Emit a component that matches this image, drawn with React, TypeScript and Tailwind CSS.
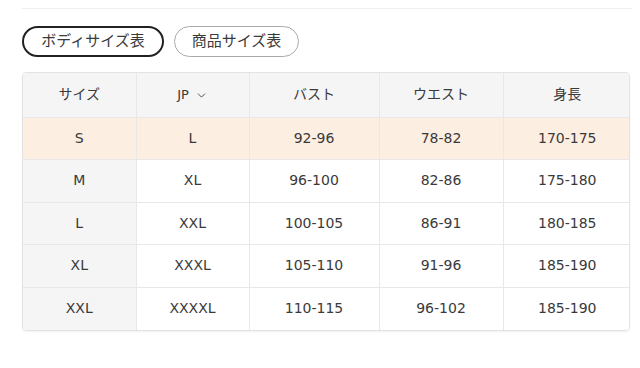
import { ChevronDown } from "lucide-react";

const rows = [
  ["S", "L", "92-96", "78-82", "170-175"],
  ["M", "XL", "96-100", "82-86", "175-180"],
  ["L", "XXL", "100-105", "86-91", "180-185"],
  ["XL", "XXXL", "105-110", "91-96", "185-190"],
  ["XXL", "XXXXL", "110-115", "96-102", "185-190"],
];

const widths = ["w-[113px]", "w-[113px]", "w-[130px]", "w-[124px]", "w-[128px]"];

export default function App() {
  return (
    <div
      className="w-[640px] h-[368px] bg-white pl-[22px] pt-[8px] text-[#3a3a3a]"
      style={{ fontFamily: '"DejaVu Sans", "Noto Sans CJK JP", sans-serif' }}
    >
      <div className="h-px w-[610px] bg-[#efefef]" />

      {/* size chart tabs */}
      <div className="flex gap-[10px] mt-[17px]">
        <button className="h-[31px] w-[142px] rounded-full border-2 border-[#222] text-[15px] flex items-center justify-center">
          ボディサイズ表
        </button>
        <button className="h-[31px] w-[125px] rounded-full border border-[#aaa] text-[15px] flex items-center justify-center">
          商品サイズ表
        </button>
      </div>

      <div className="mt-[15px] w-[608px] rounded-[4px] border border-[#e3e3e3] overflow-hidden shadow-[0_1px_2px_rgba(0,0,0,0.06)]">
        <table className="w-full border-collapse table-fixed text-[14px]">
          <thead>
            <tr className="h-[44px] bg-[#f5f5f5]">
              <th className={`${widths[0]} font-normal border-r border-[#e8e8e8]`}>サイズ</th>
              <th className={`${widths[1]} font-normal border-r border-[#e8e8e8]`}>
                <span className="inline-flex items-center gap-[6px] text-[13px]">
                  JP <ChevronDown size={13} strokeWidth={1.6} />
                </span>
              </th>
              <th className={`${widths[2]} font-normal border-r border-[#e8e8e8]`}>バスト</th>
              <th className={`${widths[3]} font-normal border-r border-[#e8e8e8]`}>ウエスト</th>
              <th className={`${widths[4]} font-normal`}>身長</th>
            </tr>
          </thead>
          <tbody>
            {rows.map((r, i) => (
              <tr
                key={r[0]}
                className={`h-[42.5px] border-t border-[#e8e8e8] ${i === 0 ? "bg-[#fdeee2]" : "bg-white"}`}
              >
                {r.map((c, j) => (
                  <td
                    key={j}
                    className={`text-center ${j < 4 ? "border-r border-[#e8e8e8]" : ""} ${
                      j === 0 && i !== 0 ? "bg-[#f5f5f5]" : ""
                    }`}
                  >
                    {c}
                  </td>
                ))}
              </tr>
            ))}
          </tbody>
        </table>
      </div>
    </div>
  );
}
